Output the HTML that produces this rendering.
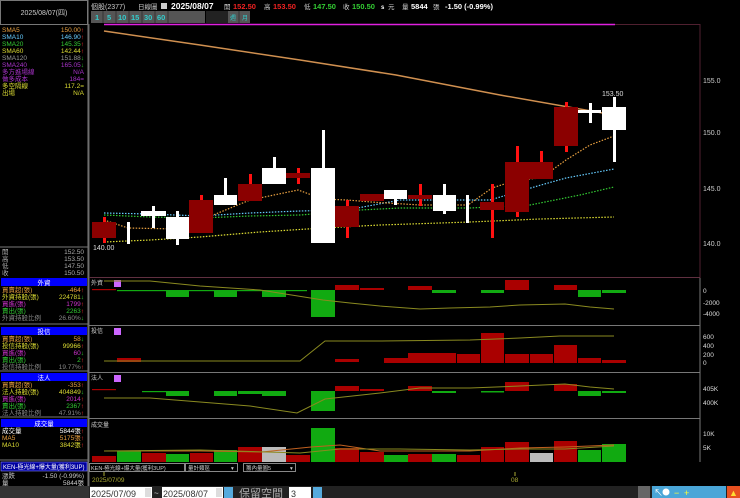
<!DOCTYPE html><html><head><meta charset="utf-8"><style>
body{margin:0;background:#000;width:740px;height:498px;overflow:hidden}
svg{display:block}
text{font-family:"Liberation Sans","Noto Sans CJK TC",sans-serif}
</style></head><body>
<svg width="740" height="498" viewBox="0 0 740 498" xmlns="http://www.w3.org/2000/svg">
<rect width="740" height="498" fill="#000"/>
<!-- left panel -->
<rect x="0.5" y="0.5" width="87" height="24" fill="#000" stroke="#777"/>
<text x="44" y="15" fill="#ccc" font-size="7" text-anchor="middle">2025/08/07(四)</text>
<line x1="88" y1="0" x2="88" y2="498" stroke="#777"/>
<g font-size="6.5">
<text x="2" y="32" fill="#e8a040">SMA5</text><text x="84" y="32" fill="#e8a040" text-anchor="end">150.00<tspan fill="#f33">↑</tspan></text>
<text x="2" y="39" fill="#6cf">SMA10</text><text x="84" y="39" fill="#6cf" text-anchor="end">146.90<tspan fill="#f33">↑</tspan></text>
<text x="2" y="46" fill="#3c3">SMA20</text><text x="84" y="46" fill="#3c3" text-anchor="end">145.35<tspan fill="#f33">↑</tspan></text>
<text x="2" y="53" fill="#dd3">SMA60</text><text x="84" y="53" fill="#dd3" text-anchor="end">142.44<tspan fill="#f33">↑</tspan></text>
<text x="2" y="60" fill="#999">SMA120</text><text x="84" y="60" fill="#999" text-anchor="end">151.88<tspan fill="#3c3">↓</tspan></text>
<text x="2" y="67" fill="#a3c">SMA240</text><text x="84" y="67" fill="#a3c" text-anchor="end">165.05<tspan fill="#3c3">↓</tspan></text>
<text x="2" y="74" fill="#a3c">多方進場線</text><text x="84" y="74" fill="#a3c" text-anchor="end">N/A</text>
<text x="2" y="81" fill="#a3c">做多成本</text><text x="84" y="81" fill="#a3c" text-anchor="end">184=</text>
<text x="2" y="88" fill="#dd3">多空隔線</text><text x="84" y="88" fill="#dd3" text-anchor="end">117.2=</text>
<text x="2" y="95" fill="#dd3">出場</text><text x="84" y="95" fill="#dd3" text-anchor="end">N/A</text>
</g>
<line x1="0" y1="247" x2="88" y2="247" stroke="#777"/>
<g font-size="6.5" fill="#aaa">
<text x="2" y="254">開</text><text x="84" y="254" text-anchor="end">152.50</text>
<text x="2" y="261">高</text><text x="84" y="261" text-anchor="end">153.50</text>
<text x="2" y="268">低</text><text x="84" y="268" text-anchor="end">147.50</text>
<text x="2" y="275">收</text><text x="84" y="275" text-anchor="end">150.50</text>
</g>
<g font-size="6.5">
<rect x="1" y="278" width="86" height="8" fill="#00f"/><text x="44" y="285" fill="#fff" text-anchor="middle">外資</text>
<text x="2" y="292" fill="#e8a040">買賣超(張)</text><text x="84" y="292" fill="#e8a040" text-anchor="end">-464<tspan fill="#f33">↑</tspan></text>
<text x="2" y="299" fill="#dd3">外資持股(張)</text><text x="84" y="299" fill="#dd3" text-anchor="end">224781<tspan fill="#3c3">↓</tspan></text>
<text x="2" y="306" fill="#c3c">買進(張)</text><text x="84" y="306" fill="#c3c" text-anchor="end">1799<tspan fill="#f33">↑</tspan></text>
<text x="2" y="313" fill="#3c3">賣出(張)</text><text x="84" y="313" fill="#3c3" text-anchor="end">2263<tspan fill="#f33">↑</tspan></text>
<text x="2" y="320" fill="#888">外資持股比例</text><text x="84" y="320" fill="#888" text-anchor="end">26.60%<tspan fill="#3c3">↓</tspan></text>
<line x1="0" y1="324" x2="88" y2="324" stroke="#777"/>
<rect x="1" y="327" width="86" height="8" fill="#00f"/><text x="44" y="334" fill="#fff" text-anchor="middle">投信</text>
<text x="2" y="341" fill="#e8a040">買賣超(張)</text><text x="84" y="341" fill="#e8a040" text-anchor="end">58<tspan fill="#3c3">↓</tspan></text>
<text x="2" y="348" fill="#dd3">投信持股(張)</text><text x="84" y="348" fill="#dd3" text-anchor="end">99966<tspan fill="#f33">↑</tspan></text>
<text x="2" y="355" fill="#c3c">買進(張)</text><text x="84" y="355" fill="#c3c" text-anchor="end">60<tspan fill="#3c3">↓</tspan></text>
<text x="2" y="362" fill="#3c3">賣出(張)</text><text x="84" y="362" fill="#3c3" text-anchor="end">2<tspan fill="#f33">↑</tspan></text>
<text x="2" y="369" fill="#888">投信持股比例</text><text x="84" y="369" fill="#888" text-anchor="end">19.77%<tspan fill="#f33">↑</tspan></text>
<line x1="0" y1="371" x2="88" y2="371" stroke="#777"/>
<rect x="1" y="373" width="86" height="8" fill="#00f"/><text x="44" y="380" fill="#fff" text-anchor="middle">法人</text>
<text x="2" y="387" fill="#e8a040">買賣超(張)</text><text x="84" y="387" fill="#e8a040" text-anchor="end">-353<tspan fill="#f33">↑</tspan></text>
<text x="2" y="394" fill="#dd3">法人持股(張)</text><text x="84" y="394" fill="#dd3" text-anchor="end">404849<tspan fill="#3c3">↓</tspan></text>
<text x="2" y="401" fill="#c3c">買進(張)</text><text x="84" y="401" fill="#c3c" text-anchor="end">2014<tspan fill="#f33">↑</tspan></text>
<text x="2" y="408" fill="#3c3">賣出(張)</text><text x="84" y="408" fill="#3c3" text-anchor="end">2367<tspan fill="#f33">↑</tspan></text>
<text x="2" y="415" fill="#888">法人持股比例</text><text x="84" y="415" fill="#888" text-anchor="end">47.91%<tspan fill="#f33">↑</tspan></text>
<line x1="0" y1="417" x2="88" y2="417" stroke="#777"/>
<rect x="1" y="419" width="86" height="8" fill="#00f"/><text x="44" y="426" fill="#fff" text-anchor="middle">成交量</text>
<text x="2" y="433" fill="#fff">成交量</text><text x="84" y="433" fill="#fff" text-anchor="end">5844張<tspan fill="#f33">↑</tspan></text>
<text x="2" y="440" fill="#e8a040">MA5</text><text x="84" y="440" fill="#e8a040" text-anchor="end">5175張<tspan fill="#f33">↑</tspan></text>
<text x="2" y="447" fill="#dd3">MA10</text><text x="84" y="447" fill="#dd3" text-anchor="end">3842張<tspan fill="#f33">↑</tspan></text>
<line x1="0" y1="460" x2="88" y2="460" stroke="#777"/>
<rect x="1" y="462" width="86" height="9" fill="#0000a0" stroke="#88f" stroke-width="0.6"/>
<text x="3" y="469" fill="#fff" font-size="6">KEN-極光線+爆大量(獲利3UP)</text>
<text x="2" y="478" fill="#ccc">漲跌</text><text x="84" y="478" fill="#ccc" text-anchor="end">-1.50 (-0.99%)</text>
<text x="2" y="485" fill="#ccc">量</text><text x="84" y="485" fill="#ccc" text-anchor="end">5844張</text>
</g>
<!-- header -->
<g font-size="7.5">
<text x="91" y="9" fill="#ccc" font-size="7">個股(2377)</text>
<text x="138" y="9" fill="#ccc" font-size="6.5">日線圖</text>
<rect x="161" y="3" width="6" height="6" fill="#ccc"/>
<text x="171" y="9" fill="#fff" font-weight="bold" font-size="8.5">2025/08/07</text>
<text x="224" y="9" fill="#ccc" font-size="6.5">開</text><text x="233" y="9" fill="#e22" font-weight="bold">152.50</text>
<text x="264" y="9" fill="#ccc" font-size="6.5">高</text><text x="273" y="9" fill="#e22" font-weight="bold">153.50</text>
<text x="304" y="9" fill="#ccc" font-size="6.5">低</text><text x="313" y="9" fill="#3c3" font-weight="bold">147.50</text>
<text x="343" y="9" fill="#ccc" font-size="6.5">收</text><text x="352" y="9" fill="#3c3" font-weight="bold">150.50</text>
<text x="381" y="9" fill="#fff" font-weight="bold" font-size="6">s</text><text x="388" y="9" fill="#ccc" font-size="6.5">元</text>
<text x="402" y="9" fill="#ccc" font-size="6.5">量</text><text x="411" y="9" fill="#fff" font-weight="bold">5844</text>
<text x="433" y="9" fill="#ccc" font-size="6.5">張</text><text x="445" y="9" fill="#fff" font-weight="bold">-1.50 (-0.99%)</text>
</g>
<g font-size="7.5" fill="#3cc" font-weight="bold">
<rect x="91" y="11" width="114" height="12" fill="#555"/>
<rect x="206" y="11" width="22" height="12" fill="#222"/>
<rect x="180" y="11" width="25" height="12" fill="#555"/>
<rect x="181" y="11" width="24" height="12" fill="#555"/>
<rect x="228" y="11" width="22" height="12" fill="#555"/>
<g stroke="#333"><line x1="103" y1="11" x2="103" y2="23"/><line x1="116" y1="11" x2="116" y2="23"/><line x1="129" y1="11" x2="129" y2="23"/><line x1="142" y1="11" x2="142" y2="23"/><line x1="155" y1="11" x2="155" y2="23"/><line x1="168" y1="11" x2="168" y2="23"/><line x1="239" y1="11" x2="239" y2="23"/></g>
<text x="95" y="20">1</text><text x="107" y="20">5</text><text x="118" y="20">10</text><text x="131" y="20">15</text><text x="144" y="20">30</text><text x="157" y="20">60</text>
<text x="230" y="20" font-size="6" font-weight="normal">週</text><text x="242" y="20" font-size="6" font-weight="normal">月</text>
</g>
<!-- main chart frame -->
<line x1="104" y1="24.5" x2="615" y2="24.5" stroke="#e020e0" stroke-width="1.5"/>
<line x1="615" y1="24.5" x2="700" y2="24.5" stroke="#502030"/>
<line x1="700" y1="24" x2="700" y2="278" stroke="#502030"/>
<line x1="89" y1="24" x2="89" y2="486" stroke="#666"/>
<line x1="89" y1="277.5" x2="700" y2="277.5" stroke="#603040"/>
<g font-size="7" fill="#ccc"><text x="703" y="83">155.0</text><text x="703" y="135">150.0</text><text x="703" y="191">145.0</text><text x="703" y="246">140.0</text></g>
<!-- SMA240 -->
<polyline points="104,31 200,45 300,60 396,75 500,95 614,115" fill="none" stroke="#d09050" stroke-width="1.5"/>
<!-- MAs dotted -->
<g fill="none" stroke-width="1.2" stroke-dasharray="1.5,1.5">
<polyline stroke="#dd3" points="104,242 150,240 200,237 260,232 323,228 380,225 470,222 540,219 614,217"/>
<polyline stroke="#3c3" points="104,215 150,217 200,218 250,216 300,215 360,210 400,208 470,208 530,205 580,195 614,187"/>
<polyline stroke="#6cf" points="104,213 150,214 200,216 250,213 300,211 347,210 400,200 450,200 490,200 541,185 566,178 614,169"/>
<polyline stroke="#e8a040" points="104,220 128,228 177,229 201,220 250,200 298,190 323,199 347,200 371,202 420,205 468,205 492,188 517,180 541,178 566,160 590,145 614,136"/>
</g>
<!-- candles -->
<g fill="#fff">
<rect x="127" y="222" width="3" height="22"/>
<rect x="152" y="206" width="3" height="22"/><rect x="141" y="211" width="25" height="5"/>
<rect x="176" y="211" width="3" height="34"/><rect x="166" y="217" width="23" height="22"/>
<rect x="224" y="178" width="3" height="27"/><rect x="214" y="195" width="23" height="10"/>
<rect x="273" y="157" width="3" height="27"/><rect x="262" y="168" width="24" height="16"/>
<rect x="322" y="130" width="3" height="113"/><rect x="311" y="168" width="24" height="75"/>
<rect x="384" y="190" width="23" height="9"/><rect x="394" y="190" width="3" height="15"/>
<rect x="443" y="184" width="3" height="30"/><rect x="433" y="195" width="23" height="16"/>
<rect x="466" y="195" width="3" height="28"/>
<rect x="589" y="103" width="3" height="20"/><rect x="578" y="110" width="23" height="3"/>
<rect x="613" y="97" width="3" height="65"/><rect x="602" y="107" width="24" height="23"/>
</g>
<g>
<rect x="103" y="217" width="3" height="26" fill="#f11"/><rect x="92" y="222" width="24" height="16" fill="#8b0000"/>
<rect x="200" y="195" width="3" height="10" fill="#f11"/><rect x="189" y="200" width="24" height="33" fill="#8b0000"/>
<rect x="249" y="174" width="3" height="12" fill="#f11"/><rect x="238" y="184" width="24" height="17" fill="#8b0000"/>
<rect x="297" y="168" width="3" height="16" fill="#f11"/><rect x="286" y="173" width="24" height="5" fill="#8b0000"/>
<rect x="346" y="200" width="3" height="38" fill="#f11"/><rect x="335" y="206" width="24" height="21" fill="#8b0000"/>
<rect x="360" y="194" width="24" height="7" fill="#8b0000"/>
<rect x="419" y="184" width="3" height="22" fill="#f11"/><rect x="408" y="195" width="24" height="4" fill="#8b0000"/>
<rect x="491" y="184" width="3" height="54" fill="#f11"/><rect x="480" y="202" width="24" height="8" fill="#8b0000"/>
<rect x="516" y="146" width="3" height="71" fill="#f11"/><rect x="505" y="162" width="24" height="50" fill="#8b0000"/>
<rect x="540" y="151" width="3" height="12" fill="#f11"/><rect x="529" y="162" width="24" height="17" fill="#8b0000"/>
<rect x="565" y="102" width="3" height="50" fill="#f11"/><rect x="554" y="107" width="24" height="39" fill="#8b0000"/>
</g>
<text x="93" y="250" fill="#ddd" font-size="7">140.00</text>
<text x="602" y="96" fill="#ddd" font-size="7">153.50</text>
<!-- sub panels -->
<g stroke="#777" fill="none">
<line x1="89" y1="325.5" x2="700" y2="325.5"/><line x1="89" y1="372.5" x2="700" y2="372.5"/>
<line x1="89" y1="418.5" x2="700" y2="418.5"/><line x1="89" y1="462.5" x2="700" y2="462.5"/>
<line x1="700" y1="278" x2="700" y2="462"/>
</g>
<g font-size="6" fill="#ccc"><text x="91" y="285">外資</text><text x="91" y="333">投信</text><text x="91" y="380">法人</text><text x="91" y="427">成交量</text></g>
<g fill="#c6f"><rect x="114" y="280" width="7" height="7"/><rect x="114" y="328" width="7" height="7"/><rect x="114" y="375" width="7" height="7"/></g>
<!-- foreign -->
<g fill="#1a1"><rect x="166" y="290" width="23" height="7"/><rect x="214" y="290" width="23" height="7"/><rect x="262" y="290" width="24" height="7"/><rect x="311" y="290" width="24" height="27"/><rect x="432" y="290" width="24" height="3"/><rect x="481" y="290" width="23" height="3"/><rect x="578" y="290" width="23" height="7"/><rect x="602" y="290" width="24" height="3"/><rect x="117" y="290" width="190" height="1.2"/></g>
<g fill="#a00"><rect x="92" y="289" width="24" height="1.2"/><rect x="335" y="285" width="24" height="5"/><rect x="360" y="288" width="24" height="2"/><rect x="408" y="286" width="24" height="4"/><rect x="505" y="280" width="24" height="10"/><rect x="554" y="285" width="23" height="5"/></g>
<polyline fill="none" stroke="#8a8a20" points="104,281 150,281 200,286 260,290 323,300 350,303 380,306 420,309 450,308 490,307 520,305 565,304 590,307 614,309"/>
<g font-size="6.5" fill="#ddd"><text x="703" y="293">0</text><text x="703" y="305">-2000</text><text x="703" y="316">-4000</text></g>
<!-- trust -->
<g fill="#a00"><rect x="117" y="358" width="24" height="4"/><rect x="335" y="359" width="24" height="3"/><rect x="384" y="358" width="24" height="5"/><rect x="408" y="353" width="48" height="10"/><rect x="457" y="354" width="23" height="9"/><rect x="481" y="333" width="23" height="30"/><rect x="505" y="354" width="24" height="9"/><rect x="530" y="354" width="23" height="9"/><rect x="554" y="345" width="23" height="18"/><rect x="578" y="358" width="23" height="5"/><rect x="602" y="360" width="24" height="3"/></g>
<polyline fill="none" stroke="#8a8a20" points="104,361 300,361 325,341 380,341 470,340 520,338 560,336 614,336"/>
<g font-size="6.5" fill="#ddd"><text x="703" y="339">600</text><text x="703" y="348">400</text><text x="703" y="357">200</text><text x="703" y="365">0</text></g>
<!-- institutional -->
<g fill="#1a1"><rect x="142" y="391" width="24" height="1.2"/><rect x="166" y="391" width="23" height="5"/><rect x="214" y="391" width="23" height="5"/><rect x="238" y="391" width="24" height="3"/><rect x="262" y="391" width="24" height="5"/><rect x="311" y="391" width="24" height="20"/><rect x="432" y="391" width="24" height="2"/><rect x="481" y="391" width="23" height="1.5"/><rect x="578" y="391" width="23" height="5"/><rect x="602" y="391" width="24" height="2"/></g>
<g fill="#a00"><rect x="92" y="389" width="24" height="1.2"/><rect x="335" y="386" width="24" height="5"/><rect x="360" y="389" width="24" height="2"/><rect x="408" y="386" width="24" height="5"/><rect x="505" y="382" width="24" height="9"/><rect x="554" y="384" width="23" height="7"/></g>
<polyline fill="none" stroke="#8a8a20" points="104,398 150,398 200,402 250,406 297,413 325,399 380,393 420,388 470,388 520,386 565,384 590,387 614,389"/>
<g font-size="6.5" fill="#ddd"><text x="703" y="391">405K</text><text x="703" y="405">400K</text></g>
<!-- volume -->
<g fill="#a00"><rect x="92" y="456" width="24" height="6"/><rect x="142" y="453" width="24" height="9"/><rect x="190" y="453" width="23" height="9"/><rect x="238" y="447" width="24" height="15"/><rect x="286" y="455" width="24" height="7"/><rect x="335" y="448" width="24" height="14"/><rect x="360" y="452" width="24" height="10"/><rect x="408" y="454" width="24" height="8"/><rect x="457" y="455" width="23" height="7"/><rect x="481" y="447" width="23" height="15"/><rect x="505" y="442" width="24" height="20"/><rect x="554" y="441" width="23" height="21"/></g>
<g fill="#1a1"><rect x="117" y="451" width="24" height="11"/><rect x="166" y="454" width="23" height="8"/><rect x="214" y="450" width="23" height="12"/><rect x="311" y="428" width="24" height="34"/><rect x="384" y="455" width="24" height="7"/><rect x="432" y="454" width="24" height="8"/><rect x="578" y="450" width="23" height="12"/><rect x="602" y="444" width="24" height="18"/></g>
<g fill="#bbb"><rect x="262" y="447" width="24" height="15"/><rect x="530" y="453" width="23" height="9"/></g>
<polyline fill="none" stroke="#c06020" points="104,451 200,451 262,452 311,447 340,445 380,451 470,451 520,448 565,447 614,445"/>
<polyline fill="none" stroke="#8a8a20" points="104,451 200,450 300,453 340,449 400,449 470,450 520,449 565,449 614,446"/>
<g font-size="6.5" fill="#ddd"><text x="703" y="436">10K</text><text x="703" y="450">5K</text><text x="703" y="470">0</text></g>
<!-- controls row -->
<rect x="89" y="462" width="651" height="10" fill="#000"/>
<g stroke="#888" fill="#000"><rect x="89.5" y="463.5" width="95" height="8"/><rect x="185.5" y="463.5" width="52" height="8"/><rect x="243.5" y="463.5" width="52" height="8"/></g>
<g font-size="5.5" fill="#ccc"><text x="91" y="470">KEN-極光線+爆大量(獲利3UP)</text><text x="188" y="470">量計類區</text><text x="246" y="470">籌內量圖5</text><text x="231" y="470">▾</text><text x="290" y="470">▾</text></g>
<line x1="104" y1="472" x2="104" y2="476" stroke="#aa3"/><line x1="515" y1="472" x2="515" y2="476" stroke="#aa3"/>
<text x="92" y="482" fill="#aa3" font-size="6.5">2025/07/09</text>
<text x="511" y="482" fill="#aa3" font-size="6.5">08</text>
<!-- bottom bar -->
<rect x="0" y="486" width="740" height="12" fill="#333"/>
<rect x="89" y="486" width="651" height="12" fill="#222"/>
<g font-size="9" fill="#333"><rect x="90" y="487" width="62" height="11" fill="#fff"/><text x="91" y="497">2025/07/09</text>
<rect x="145" y="488" width="6" height="9" fill="#ddd"/>
<text x="154" y="496" fill="#ccc" font-size="8">~</text>
<rect x="162" y="487" width="61" height="11" fill="#fff"/><text x="163" y="497">2025/08/07</text>
<rect x="216" y="488" width="6" height="9" fill="#ddd"/>
<rect x="224" y="487" width="9" height="11" fill="#5ad"/>
<text x="239" y="497" fill="#aaa" font-size="11">保留空間</text>
<rect x="289" y="487" width="22" height="11" fill="#fff"/><text x="291" y="497">3</text>
<rect x="313" y="487" width="9" height="11" fill="#5ad"/>
</g>
<rect x="638" y="486" width="12" height="12" fill="#666"/>
<rect x="652" y="486" width="74" height="12" fill="#4aa6d8"/>
<rect x="727" y="486" width="13" height="12" fill="#e85020"/>
<g font-size="9" fill="#fff"><text x="654" y="496">↖</text><text x="674" y="496" fill="#ff3">−</text><text x="684" y="496" fill="#ff3">+</text><circle cx="666" cy="492" r="3.5" fill="#fff"/><text x="729" y="496" fill="#fd3">▲</text></g>
</svg>
</body></html>
